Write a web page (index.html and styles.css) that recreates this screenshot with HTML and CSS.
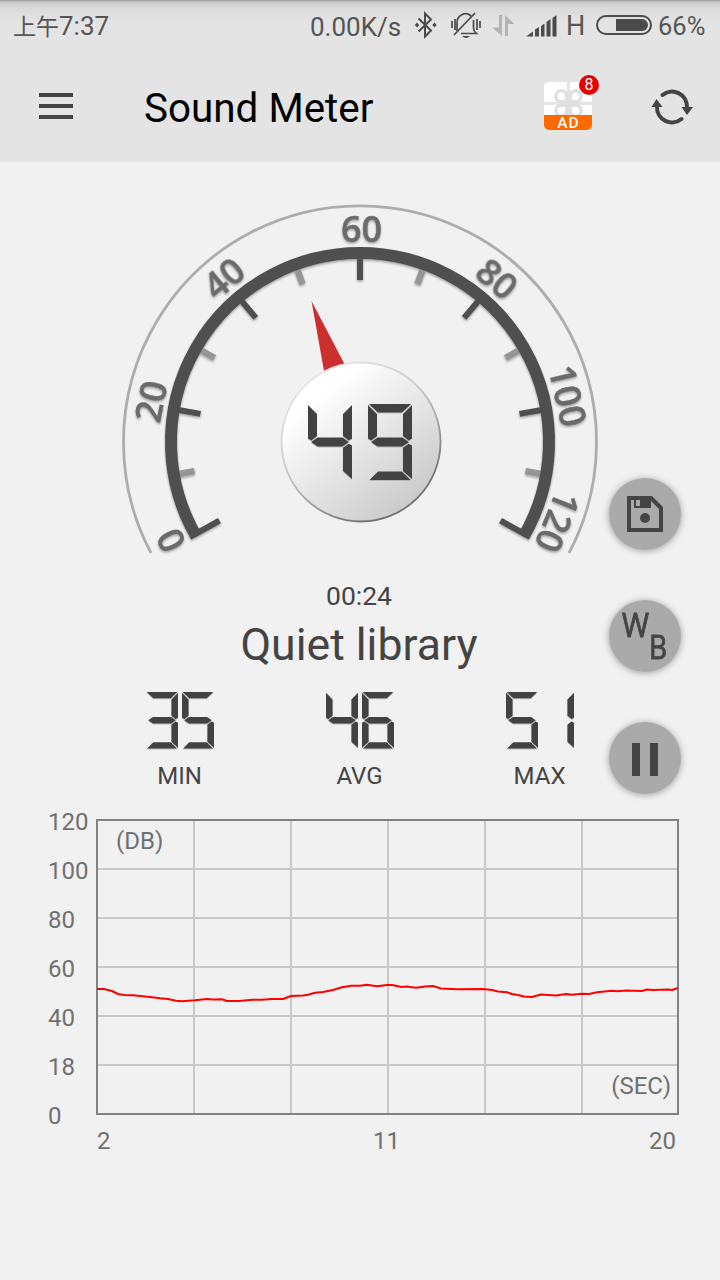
FILE: index.html
```html
<!DOCTYPE html>
<html lang="en">
<head>
<meta charset="utf-8">
<title>Sound Meter</title>
<link rel="stylesheet" href="styles.css">
</head>
<body>
<div class="screen">
  <header class="top">
    <div class="status">
      <span class="clock"><span class="ampm">上午</span>7:37</span>
      <span class="speed">0.00K/s</span>
      <svg class="ico" width="24" height="28" viewBox="0 0 24 28" fill="none" stroke="#4b4b4b" stroke-width="2"><path d="M4.5 7.5 17 19.5 11 25.5V2.5l6 6L4.5 20.5"/><path d="M3 11.5 5.200 14 3 16.500.8 14zM20.500 11.500 22.700 14 20.500 16.500 18.300 14z" fill="#4b4b4b" stroke="none"/></svg>
      <svg class="ico" width="30" height="28" viewBox="0 0 30 28" fill="none" stroke="#4b4b4b" stroke-width="1.700"><path d="M6 20V12a8.500 9 0 0 1 14-7M22.500 9v8q0 3 3 5.500H10M3 24 24 2M1 10v7M4 8v11M26 8v11M29 10v7"/><path d="M11 25h8q-4 4-8 0z" fill="#4b4b4b" stroke="none"/></svg>
      <svg class="ico" width="24" height="28" viewBox="0 0 24 28" fill="#b4b4b4"><path d="M7 4h3v21L0 16.500h7zM13 25V4l9.500 9H16v12z"/></svg>
      <svg class="ico" width="32" height="28" viewBox="0 0 32 28" fill="#4b4b4b"><path d="M0 25.500 7 20.500v5zM9 25.500v-7l4-2.500v9.500zM15 25.500V15l3.500-2.500v13zM20.500 25.500V11l4-3v17.500zM26.500 25.500V7l4-3v21.500z"/></svg>
      <span class="net">H</span>
      <svg class="ico" width="56" height="28" viewBox="0 0 56 28"><rect x="1" y="5" width="54" height="18" rx="9" fill="none" stroke="#4b4b4b" stroke-width="2"/><path d="M20 8h26a6 6 0 0 1 0 12H20z" fill="#4b4b4b"/></svg>
      <span class="percent">66%</span>
    </div>
    <div class="bar">
      <svg class="menu" width="34" height="28" viewBox="0 0 34 28" fill="#444"><path d="M0 1h34v4H0zM0 12h34v4H0zM0 23h34v4H0z"/></svg>
      <h1 class="title">Sound Meter</h1>
      <div class="gift">
        <svg width="48" height="48" viewBox="0 0 48 48"><rect width="48" height="48" rx="5" fill="#fff"/><path d="M24.500 0v33M0 21.500h48" stroke="#e4e4e4" stroke-width="3"/><g fill="#fff" stroke="#e0e0e0" stroke-width="3.500"><path d="M22.800 19.800h-5a5.500 5.500 0 1 1 5-6zM26.200 19.800h5a5.500 5.500 0 1 0-5-6zM22.800 23.200h-5a5.500 5.500 0 1 0 5 6zM26.200 23.200h5a5.500 5.500 0 1 1-5 6z"/></g><path d="M0 33h48v10a5 5 0 0 1-5 5H5a5 5 0 0 1-5-5z" fill="#ff6a00"/></svg>
        <span class="ad">AD</span>
        <span class="badge">8</span>
      </div>
      <svg class="refresh" width="42" height="36" viewBox="0 0 42 36" fill="none" stroke="#444" stroke-width="4"><path d="M11.500 6A15 15 0 0 1 36 18M30.500 30A15 15 0 0 1 6 18" stroke-linecap="round"/><path d="M30.500 18H42l-6 8zM.5 18H11.500L5.500 10z" fill="#444" stroke="none"/></svg>
    </div>
  </header>

  <svg class="gauge" width="720" height="400" viewBox="-360 -280 720 400">
    <defs>
      <linearGradient id="knob" x1=".2" y1=".1" x2=".85" y2=".9"><stop offset=".1" stop-color="#fff"/><stop offset="1" stop-color="#c9c9c9"/></linearGradient>
      <linearGradient id="rim" x1=".2" y1=".1" x2=".7" y2=".9"><stop offset="0" stop-color="#e4e4e4"/><stop offset=".4" stop-color="#ccc"/><stop offset="1" stop-color="#707070"/></linearGradient>
      <filter id="soft" x="-10%" y="-10%" width="120%" height="120%"><feDropShadow dx="0" dy="1.500" stdDeviation="1" flood-opacity=".35"/></filter>
    </defs>
    <path d="M-209 111A236.500 236.500 0 1 1 209 111" fill="none" stroke="#adadad" stroke-width="2.800"/>
    <g filter="url(#soft)">
      <g stroke="#959595" stroke-width="6.500">
        <path d="M0-184V-168" transform="rotate(-100)"/><path d="M0-184V-168" transform="rotate(-60)"/><path d="M0-184V-168" transform="rotate(-20)"/><path d="M0-184V-168" transform="rotate(20)"/><path d="M0-184V-168" transform="rotate(60)"/><path d="M0-184V-168" transform="rotate(100)"/>
      </g>
      <g stroke="#505050" stroke-width="6">
        <path d="M0-192V-161" transform="rotate(-119.200)"/><path d="M0-190V-162" transform="rotate(-80)"/><path d="M0-190V-162" transform="rotate(-40)"/><path d="M0-190V-162"/><path d="M0-190V-162" transform="rotate(40)"/><path d="M0-190V-162" transform="rotate(80)"/><path d="M0-192V-161" transform="rotate(119.200)"/>
      </g>
      <path d="M-163.700 94.500A189 189 0 1 1 163.700 94.500" fill="none" stroke="#505050" stroke-width="12"/>
    </g>
    <g class="scale" filter="url(#soft)">
      <text transform="rotate(-117.500)" y="-200">0</text>
      <text transform="rotate(-79)" y="-200">20</text>
      <text transform="rotate(-39.700)" y="-200.500">40</text>
      <text x="1.500" y="-200.500">60</text>
      <text transform="rotate(40)" y="-200.500">80</text>
      <text transform="rotate(77.500)" y="-200">100</text>
      <text transform="rotate(112)" y="-200">120</text>
    </g>
    <path d="M-48.500-141-36-71-15-77z" fill="#cd2e2e"/>
    <circle cx="1" cy="0" r="79.500" fill="url(#knob)" stroke="url(#rim)" stroke-width="1.800"/>
    <foreignObject x="-53" y="-38" width="106" height="80">
      <div class="lcd lcd-big" role="img" aria-label="49"><span class="digit"><i class="f"></i><i class="g"></i><i class="b"></i><i class="c"></i></span><span class="digit"><i class="a"></i><i class="f"></i><i class="g"></i><i class="b"></i><i class="c"></i><i class="d"></i></span></div>
    </foreignObject>
  </svg>

  <div class="elapsed">00:24</div>
  <div class="level">Quiet library</div>

  <div class="stats">
    <div class="stat">
      <div class="lcd" role="img" aria-label="35"><span class="digit"><i class="a"></i><i class="b"></i><i class="g"></i><i class="c"></i><i class="d"></i></span><span class="digit"><i class="a"></i><i class="f"></i><i class="g"></i><i class="c"></i><i class="d"></i></span></div>
      <span class="caption">MIN</span>
    </div>
    <div class="stat">
      <div class="lcd" role="img" aria-label="46"><span class="digit"><i class="f"></i><i class="g"></i><i class="b"></i><i class="c"></i></span><span class="digit"><i class="a"></i><i class="f"></i><i class="g"></i><i class="e"></i><i class="c"></i><i class="d"></i></span></div>
      <span class="caption">AVG</span>
    </div>
    <div class="stat">
      <div class="lcd" role="img" aria-label="51"><span class="digit"><i class="a"></i><i class="f"></i><i class="g"></i><i class="c"></i><i class="d"></i></span><span class="digit"><i class="b"></i><i class="c"></i></span></div>
      <span class="caption">MAX</span>
    </div>
  </div>

  <section class="chart">
    <div class="y-axis"><span>120</span><span>100</span><span>80</span><span>60</span><span>40</span><span>18</span><span>0</span></div>
    <svg class="plot" width="584" height="296" viewBox="96 819 584 296">
      <path d="M98 869H678M98 918H678M98 967H678M98 1016H678M98 1065H678M194 820V1114M291 820V1114M388 820V1114M485 820V1114M582 820V1114" stroke="#a0a0a0" stroke-opacity=".5" stroke-width="2"/>
      <rect x="97" y="820" width="581" height="294" fill="none" stroke="#828282" stroke-width="2"/>
      <text x="116" y="849">(DB)</text>
      <text x="671" y="1094" text-anchor="end">(SEC)</text>
      <polyline fill="none" stroke="#f00" stroke-width="2" stroke-linejoin="round" points="97,989 104,989 112,991 118,994 124,995 133,995.300 150,997 160,998.300 168,999 176,1000.700 182,1001.300 195,1000.300 207,999 213,999.500 222,999.300 227,1001 239,1001 253,999.800 262,999.800 272,999 283,999 291,996 303,995.500 308,994.800 315,992.800 323,992 333,990 341,987.500 351,985.700 360,985.800 367,984.800 377,986.200 387,985 392,985 402,987 407,986.500 416,987.700 425,986.500 433,986 441,988.500 457,989.200 483,989 492,990 498,991.500 507,992.300 512,994 518,995 524,996.500 532,997 541,994.500 556,995.500 566,994 572,994.700 582,993.700 589,994 597,992.300 612,990.800 617,991.300 626,990.500 642,991 647,989.500 653,990 668,989.500 672,990 678,988"/>
    </svg>
    <div class="x-axis"><span>2</span><span>11</span><span>20</span></div>
  </section>

  <nav class="actions">
    <button class="fab" aria-label="Save"><svg width="36" height="36" viewBox="0 0 36 36" fill="#444"><path fill-rule="evenodd" d="M0 0H25L36 11V36H0zM4 4V32H32V13L24 5V12H7V4z"/><path d="M9 4h4v6H9z" fill="#aaa"/><circle cx="18" cy="22" r="5"/></svg></button>
    <button class="fab"><svg class="wb" width="72" height="72" viewBox="0 0 72 72"><text x="13" y="37" textLength="27" lengthAdjust="spacingAndGlyphs">W</text><text x="40" y="59" textLength="18" lengthAdjust="spacingAndGlyphs">B</text></svg></button>
    <button class="fab" aria-label="Pause"><svg class="pause" width="26" height="33" viewBox="0 0 26 33" fill="#444"><path d="M0 0h8v33H0zM18 0h8v33h-8z"/></svg></button>
  </nav>
</div>
</body>
</html>
```

FILE: styles.css
```css
* { box-sizing: border-box; }
body { margin: 0; background: #f1f1f1; font-family: Roboto, "Noto Sans CJK SC", sans-serif; color: #444; }
.screen { position: relative; width: 720px; height: 1280px; overflow: hidden; }

.top { height: 162px; background: linear-gradient(#999 0, #c8c8c8 2px, #dadada 8px, #e4e4e4 24px); }
.status { display: grid; grid-template-columns: 297px 104px 37px 41px 34px 40px 30px 62px 1fr; grid-template-rows: 52px; align-items: center; height: 52px; padding-left: 13px; font-size: 26px; line-height: 50px; color: #555; white-space: nowrap; }
.ico { display: block; margin-top: -3px; }
.clock { padding-top: 1px; font-size: 26px; }
.ampm { font-size: 23px; }
.speed { padding-top: 2px; }
.net { font-size: 27px; }
.percent { font-size: 25.500px; }

.bar { display: flex; align-items: center; height: 110px; padding: 0 27px 0 39px; }
.menu { margin-top: -2px; }
.title { flex: 1; margin: 0 0 0 71px; padding-top: 3px; font-size: 40.400px; font-weight: 400; line-height: 107px; color: #000; }
.gift { position: relative; width: 48px; height: 48px; margin: -2px 59px 0 0; }
.gift svg { display: block; }
.ad { position: absolute; left: 0; bottom: -1px; width: 49px; color: #fff; font-size: 15.500px; line-height: 15px; letter-spacing: 1px; text-align: center; font-weight: 500; }
.badge { position: absolute; left: 35px; top: -7px; width: 20px; height: 20px; border-radius: 50%; background: #e60000; color: #fff; font-size: 16px; line-height: 20px; text-align: center; font-weight: 400; }

.gauge { display: block; }
.scale { font: 600 36px "Open Sans", sans-serif; fill: #6b6b6b; stroke: #6b6b6b; stroke-width: .4px; text-anchor: middle; }

.lcd { display: flex; justify-content: center; gap: 4px; filter: drop-shadow(0 1.500px 0 #b9b9b9); }
.lcd-big { gap: 16px; }
.digit { display: grid; width: 32px; height: 56.500px; }
.lcd-big .digit { width: 44px; height: 76px; }
.digit i { grid-area: 1 / 1; background: #424242; }
.a { clip-path: polygon(2.300% 0, 97.700% 0, 77.300% 11.200%, 22.700% 11.200%); }
.f { clip-path: polygon(0 1.300%, 20.500% 13.200%, 20.500% 42.100%, 7.500% 48%, 0 45.400%); }
.b { clip-path: polygon(100% 1.300%, 79.500% 13.200%, 79.500% 42.100%, 92.500% 48%, 100% 45.400%); }
.g { clip-path: polygon(7% 50%, 21.600% 44.100%, 78.400% 44.100%, 93% 50%, 78.400% 55.900%, 21.600% 55.900%); }
.e { clip-path: polygon(0 54.600%, 7.500% 52.300%, 20.500% 57.500%, 20.500% 88%, 0 98.700%); }
.c { clip-path: polygon(100% 54.600%, 92.500% 52.300%, 79.500% 57.500%, 79.500% 88%, 100% 98.700%); }
.d { clip-path: polygon(3.400% 100%, 96.600% 100%, 77.300% 88.800%, 22.700% 88.800%); }

.elapsed { height: 40px; margin-top: 14px; padding-right: 2px; font-size: 26.500px; line-height: 40px; text-align: center; }
.level { height: 60px; padding-right: 2px; font-size: 44.600px; line-height: 58px; text-align: center; }
.stats { display: grid; grid-template-columns: repeat(3, 180px); justify-content: center; height: 115px; padding-top: 16px; }
.stat { display: flex; flex-direction: column; align-items: center; gap: 12px; }
.caption { padding-right: 1px; font-size: 24px; line-height: 30px; }

.chart { display: grid; grid-template-columns: 48px 584px; grid-template-rows: 296px 48px; margin: 28px 0 0 48px; color: #707070; font-size: 24px; }
.y-axis { display: grid; grid-auto-rows: 49px; line-height: 49px; margin-top: -21px; }
.plot { display: block; }
.plot text { font-size: 24px; fill: #707070; }
.x-axis { grid-column: 2; display: grid; grid-template-columns: 276px 1fr auto; padding: 11px 4px 0 1px; line-height: 30px; }

.actions { position: absolute; left: 609px; top: 478px; display: grid; gap: 50px; }
.fab { display: grid; place-items: center; width: 72px; height: 72px; padding: 0; border: 0; border-radius: 50%; background: #aaa; box-shadow: 0 1px 7px rgba(0,0,0,.35); color: #444; }
.wb { font: 400 32px "Open Sans", sans-serif; fill: #444; stroke: #444; stroke-width: .9px; }
.pause { margin-top: 2px; }
```
